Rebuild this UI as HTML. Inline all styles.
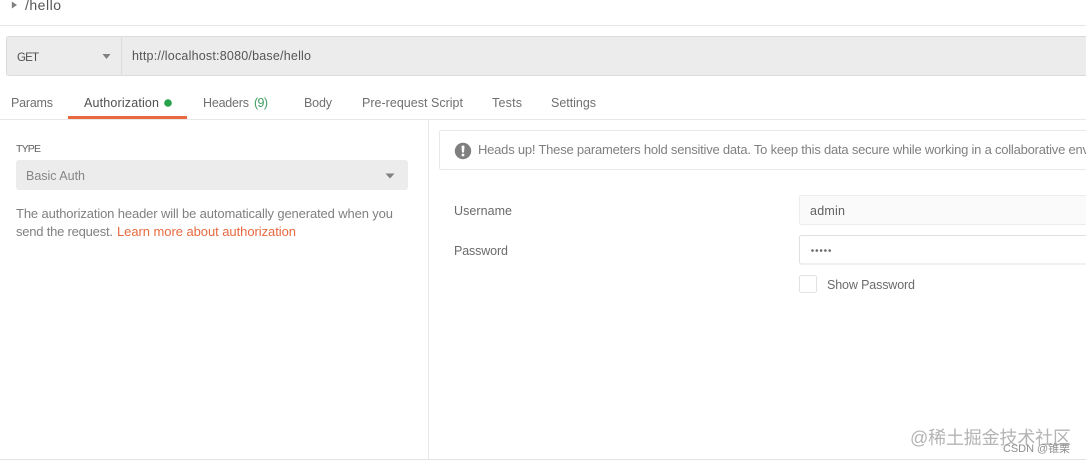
<!DOCTYPE html>
<html lang="en">
<head>
<meta charset="utf-8">
<title>/hello</title>
<style>
html,body{margin:0;padding:0;background:#fff;width:1086px;height:463px;overflow:hidden}
svg{display:block;font-family:"Liberation Sans","Noto Sans CJK SC",sans-serif;filter:blur(0.3px)}
text{white-space:pre}
</style>
</head>
<body>
<svg width="1086" height="463" viewBox="0 0 1086 463" xmlns="http://www.w3.org/2000/svg">
<rect width="1086" height="463" fill="#fff"/>

<path d="M11.800 1.500L17 5L11.800 8.500Z" fill="#808080"/>
<text x="25" y="10" font-size="14" fill="#555" textLength="36">/hello</text>
<rect x="0" y="25" width="1086" height="1" fill="#e6e6e6"/>

<rect x="6.500" y="36.500" width="1090" height="39" rx="2" fill="#ececec" stroke="#dcdcdc"/>
<rect x="121" y="37" width="1" height="38" fill="#dcdcdc"/>
<text x="17" y="61" font-size="11.500" fill="#505050" textLength="22">GET</text>
<path d="M102.500 54H110.500L106.500 59Z" fill="#808080"/>
<text x="132" y="60" font-size="12.500" fill="#555" textLength="179">http://localhost:8080/base/hello</text>

<text x="11" y="107" font-size="12.500" fill="#707070" textLength="42">Params</text>
<text x="84" y="107" font-size="12.500" fill="#505050" textLength="75">Authorization</text>
<circle cx="168" cy="103" r="3.800" fill="#26a34a"/>
<text x="203" y="107" font-size="12.500" fill="#707070" textLength="46">Headers</text>
<text x="254" y="107" font-size="12.500" fill="#3f9e63" textLength="14">(9)</text>
<text x="304" y="107" font-size="12.500" fill="#707070" textLength="28">Body</text>
<text x="362" y="107" font-size="12.500" fill="#707070" textLength="101">Pre-request Script</text>
<text x="492" y="107" font-size="12.500" fill="#707070" textLength="30">Tests</text>
<text x="551" y="107" font-size="12.500" fill="#707070" textLength="45">Settings</text>
<rect x="0" y="119" width="1086" height="1" fill="#e8e8e8"/>
<rect x="68" y="116" width="119" height="3" fill="#e8693f"/>

<rect x="428" y="120" width="1" height="339" fill="#e8e8e8"/>
<rect x="0" y="459" width="1086" height="1" fill="#e2e2e2"/>

<text x="16" y="152" font-size="10.500" fill="#606060" textLength="25">TYPE</text>
<rect x="16" y="160" width="392" height="30" rx="3" fill="#ececec"/>
<text x="26" y="180" font-size="12.500" fill="#868686" textLength="59">Basic Auth</text>
<path d="M385.500 173.500H394.500L390 178.500Z" fill="#808080"/>
<text x="16" y="218" font-size="13" fill="#808080" textLength="377">The authorization header will be automatically generated when you</text>
<text x="16" y="236" font-size="13" fill="#808080" textLength="97">send the request.</text>
<text x="117" y="236" font-size="13" fill="#e8693f" textLength="179">Learn more about authorization</text>

<rect x="439.500" y="130.500" width="660" height="39" rx="2" fill="#fff" stroke="#e8e8e8"/>
<circle cx="463" cy="151" r="8.200" fill="#7f7f7f"/>
<path d="M461.500 146.500Q461.500 145.500 463 145.500Q464.500 145.500 464.500 146.500L464 152.500H462Z" fill="#fff"/>
<circle cx="463" cy="155" r="1.400" fill="#fff"/>
<text x="478" y="154" font-size="13" fill="#808080" textLength="611">Heads up! These parameters hold sensitive data. To keep this data secure while working in a collaborative env</text>

<text x="454" y="215" font-size="12.500" fill="#6b6b6b" textLength="58">Username</text>
<text x="454" y="255" font-size="12.500" fill="#6b6b6b" textLength="54">Password</text>

<rect x="799.500" y="195.500" width="300" height="29" rx="2" fill="#fafafa" stroke="#ececec"/>
<text x="810" y="215" font-size="12.500" fill="#606060" textLength="35">admin</text>
<rect x="799.500" y="235.500" width="300" height="28.500" rx="2" fill="#fff" stroke="#e0e0e0"/>
<g fill="#666">
<circle cx="812.500" cy="250.500" r="1.300"/>
<circle cx="816.800" cy="250.500" r="1.300"/>
<circle cx="821.100" cy="250.500" r="1.300"/>
<circle cx="825.400" cy="250.500" r="1.300"/>
<circle cx="829.700" cy="250.500" r="1.300"/>
</g>
<rect x="799.500" y="275.500" width="17" height="17" rx="2" fill="#fff" stroke="#e2e2e2"/>
<text x="827" y="289" font-size="12.500" fill="#6b6b6b" textLength="88">Show Password</text>

<text x="910" y="444" font-size="18" fill="#b4b4b4" textLength="161">@稀土掘金技术社区</text>
<text x="1003" y="452" font-size="11" fill="#8e8e8e" textLength="67">CSDN @锥栗</text>
</svg>
</body>
</html>
